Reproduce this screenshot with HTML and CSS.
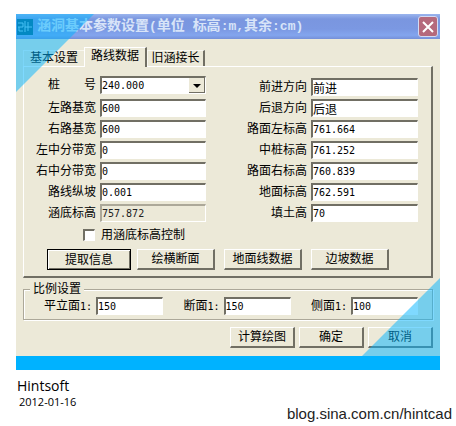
FILE: index.html
```html
<!DOCTYPE html>
<html lang="zh-CN">
   <head>
      <meta charset="utf-8">
      <title>涵洞基本参数设置</title>
      <link rel="stylesheet" href="styles.css">
   </head>
   <body>
      <div class="window">
         <div class="title-bar">
            <svg class="app-icon" viewBox="0 0 16 16" width="16" height="16">
               <rect width="16" height="16" fill="#075f86"/>
               <path d="M1 4h5v4M1 8h5M2 8v4h4M8 2v11M8 8h7M11 3v9" fill="none" stroke="#8fd0ec" stroke-width="1"/>
            </svg>
            <h1>涵洞基本参数设置<span>(</span>单位<span> </span>标高<span>:m,</span>其余<span>:cm)</span></h1>
            <button class="close-btn" type="button" aria-label="关闭">
               <svg viewBox="0 0 20 20" width="20" height="20">
                  <path d="M5 5l10 10M15 5L5 15" stroke="#fff" stroke-width="2"/>
               </svg>
            </button>
         </div>
         <form class="window-body">
            <div class="tabs">
               <button class="tab" type="button">基本设置</button>
               <button class="tab active" type="button">路线数据</button>
               <button class="tab last" type="button">旧涵接长</button>
            </div>
            <div class="panel">
               <div class="columns">
                  <div class="column">
                     <div class="row row-select">
                        <label class="spread" for="stake"><span>桩</span><span>号</span></label>
                        <select class="field" id="stake"><option>240.000</option></select>
                     </div>
                     <div class="row"><label for="leftBase">左路基宽</label><input class="field" id="leftBase" type="text" value="600"></div>
                     <div class="row"><label for="rightBase">右路基宽</label><input class="field" id="rightBase" type="text" value="600"></div>
                     <div class="row"><label for="leftStrip">左中分带宽</label><input class="field" id="leftStrip" type="text" value="0"></div>
                     <div class="row"><label for="rightStrip">右中分带宽</label><input class="field" id="rightStrip" type="text" value="0"></div>
                     <div class="row"><label for="slope">路线纵坡</label><input class="field" id="slope" type="text" value="0.001"></div>
                     <div class="row"><label for="bottom">涵底标高</label><input class="field" id="bottom" type="text" value="757.872" disabled></div>
                  </div>
                  <div class="column column-right">
                     <div class="row"><label for="forward">前进方向</label><input class="field field-cn" id="forward" type="text" value="前进"></div>
                     <div class="row"><label for="backward">后退方向</label><input class="field field-cn" id="backward" type="text" value="后退"></div>
                     <div class="row"><label for="leftLevel">路面左标高</label><input class="field" id="leftLevel" type="text" value="761.664"></div>
                     <div class="row"><label for="midLevel">中桩标高</label><input class="field" id="midLevel" type="text" value="761.252"></div>
                     <div class="row"><label for="rightLevel">路面右标高</label><input class="field" id="rightLevel" type="text" value="760.839"></div>
                     <div class="row"><label for="ground">地面标高</label><input class="field" id="ground" type="text" value="762.591"></div>
                     <div class="row"><label for="fill">填土高</label><input class="field" id="fill" type="text" value="70"></div>
                  </div>
               </div>
               <div class="check-row">
                  <input id="useBottom" type="checkbox">
                  <label for="useBottom">用涵底标高控制</label>
               </div>
               <div class="panel-buttons">
                  <button class="btn default" type="button">提取信息</button>
                  <button class="btn" type="button">绘横断面</button>
                  <button class="btn" type="button">地面线数据</button>
                  <button class="btn" type="button">边坡数据</button>
               </div>
            </div>
            <fieldset class="scales">
               <legend>比例设置</legend>
               <div class="scale"><label for="plan">平立面<span>1:</span></label><input class="field" id="plan" type="text" value="150"></div>
               <div class="scale"><label for="section">断面<span>1:</span></label><input class="field" id="section" type="text" value="150"></div>
               <div class="scale"><label for="side">侧面<span>1:</span></label><input class="field" id="side" type="text" value="100"></div>
            </fieldset>
            <div class="footer-buttons">
               <button class="btn" type="button">计算绘图</button>
               <button class="btn" type="button">确定</button>
               <button class="btn" type="button">取消</button>
            </div>
         </form>
         <div class="corner corner-top"></div>
         <div class="corner corner-bottom"></div>
      </div>
      <div class="bottom-strip"></div>
      <div class="page-foot">
         <div class="credit">
            <div class="name">Hintsoft</div>
            <div class="date">2012-01-16</div>
         </div>
         <div class="blog">blog.sina.com.cn/hintcad</div>
      </div>
   </body>
</html>
```
FILE: styles.css
```css
* {
   margin: 0;
   padding: 0;
   box-sizing: border-box;
}
body {
   padding: 14px 0 0;
   background: #fff;
   color: #000;
   font-family: "DejaVu Sans Mono", "Noto Sans CJK SC", sans-serif;
   font-size: 12px;
   line-height: 14px;
}
button,
input,
select {
   font: inherit;
   color: inherit;
}
.window {
   position: relative;
   margin: 0 16px;
   background: #ece9d8;
}
.title-bar {
   display: flex;
   align-items: center;
   height: 25px;
   padding: 0 2px 0 1px;
   background: linear-gradient(#9bb5ee, #7a96df 20%, #7b98e2 60%, #83a5ee 85%, #7590d8);
}
.app-icon {
   margin-right: 4px;
}
.title-bar h1 {
   flex: 1;
   font-family: "Liberation Mono", "Noto Sans CJK SC", monospace;
   font-size: 14px;
   font-weight: bold;
   line-height: 20px;
   color: #d8e4f8;
   white-space: pre;
}
.title-bar h1 span {
   font-size: 13px;
}
.close-btn {
   width: 20px;
   height: 21px;
   border: 1px solid #d3daf3;
   border-radius: 3px;
   background: #b5697c;
   display: flex;
   align-items: center;
   justify-content: center;
}
.close-btn svg {
   flex: none;
}
.window-body {
   padding: 8px 7px;
}
.tabs {
   display: flex;
   align-items: flex-end;
   height: 19px;
}
.tab {
   width: 61px;
   height: 16px;
   border: none;
   border-top: 1px solid #f8f7f0;
   border-left: 1px solid #f8f7f0;
   background: #ece9d8;
   line-height: 15px;
}
.tab.active {
   width: 63px;
   height: 20px;
   margin-bottom: -1px;
   padding-bottom: 3px;
   border-right: 2px solid #716f64;
   border-color: #fff #716f64 #fff #fff;
   z-index: 1;
}
.tab.last {
   width: 58px;
   border-right: 2px solid #716f64;
}
.panel {
   padding: 9px 13px 6px 12px;
   border: 1px solid #fff;
   border-right: 2px solid #716f64;
   border-bottom: 2px solid #716f64;
}
.columns {
   display: flex;
   justify-content: space-between;
}
.column {
   display: flex;
   flex-direction: column;
   gap: 3px;
}
.column-right {
   padding-top: 2px;
}
.row {
   display: flex;
   align-items: center;
   justify-content: flex-end;
   gap: 4px;
   height: 18px;
}
.row-select {
   margin-bottom: 2px;
}
.spread {
   display: flex;
   justify-content: space-between;
   width: 48px;
}
.field {
   width: 106px;
   height: 18px;
   border: 1px solid #fff;
   border-top: 2px solid #716f64;
   border-left: 2px solid #716f64;
   border-radius: 0;
   background: #fff;
   font-size: 10px;
}
.column-right .field {
   width: 107px;
}
.field.field-cn {
   font-size: 12px;
}
.field:disabled {
   border-top-color: #aca899;
   border-left-color: #aca899;
   background: #ece9d8;
   -webkit-text-fill-color: #222;
}
select.field {
   appearance: none;
   background: url("data:image/svg+xml,%3Csvg xmlns='http://www.w3.org/2000/svg' width='16' height='15'%3E%3Cpath fill='%23716f64' d='M0 0h16v15H0z'/%3E%3Cpath fill='%23ece9d8' d='M0 0h15v14H0z'/%3E%3Cpath d='M4 6h8L8 10z'/%3E%3C/svg%3E") no-repeat right top #fff;
}
.check-row {
   display: flex;
   align-items: center;
   gap: 6px;
   height: 14px;
   margin: 6px 0 0 47px;
}
.check-row input {
   appearance: none;
   width: 12px;
   height: 12px;
   border: 1px solid #fff;
   border-top: 2px solid #716f64;
   border-left: 2px solid #716f64;
   background: #fff;
}
.panel-buttons {
   display: flex;
   gap: 9px;
   padding: 7px 0 0 11px;
}
.btn {
   width: 78px;
   height: 21px;
   border: 1px solid #fff;
   border-right: 2px solid #716f64;
   border-bottom: 2px solid #716f64;
   background: #ece9d8;
   line-height: 18px;
}
.btn.default {
   width: 84px;
   margin-right: -3px;
   border: 1px solid #000;
   box-shadow: inset 1px 1px #fff, inset -1px -1px #716f64;
}
.scales {
   display: flex;
   justify-content: space-between;
   margin-top: 4px;
   padding: 1px 14px 4px 20px;
   border: 1px solid #aca899;
   box-shadow: 1px 1px #fff, inset 1px 1px #fff;
}
.scales legend {
   margin-left: -14px;
   padding: 0 3px;
   background: #ece9d8;
}
.scale {
   display: flex;
   align-items: center;
   gap: 4px;
}
.scale label span {
   font-size: 10px;
}
.scale .field {
   width: 67px;
}
.footer-buttons {
   display: flex;
   justify-content: flex-end;
   gap: 4px;
   padding-top: 7px;
}
.footer-buttons .btn {
   width: 65px;
}
.corner {
   position: absolute;
   width: 78px;
   height: 78px;
   background: rgba(0, 180, 255, 0.5);
   pointer-events: none;
}
.corner-top {
   top: 0;
   left: 0;
   clip-path: polygon(0 0, 100% 0, 0 100%);
}
.corner-bottom {
   right: 0;
   bottom: 0;
   clip-path: polygon(100% 0, 100% 100%, 0 100%);
}
.bottom-strip {
   height: 14px;
   margin: 0 16px;
   background: #00b2ff;
}
.page-foot {
   display: flex;
   justify-content: space-between;
   padding: 7px 4px 0 17px;
}
.credit {
   font-family: "Open Sans", sans-serif;
}
.name {
   font-size: 14px;
   line-height: 18px;
}
.date {
   padding-left: 2px;
   font-size: 11px;
   line-height: 14px;
}
.blog {
   padding-top: 28px;
   font-family: "Liberation Sans", sans-serif;
   font-size: 15px;
   line-height: 18px;
   color: #222;
}
```
